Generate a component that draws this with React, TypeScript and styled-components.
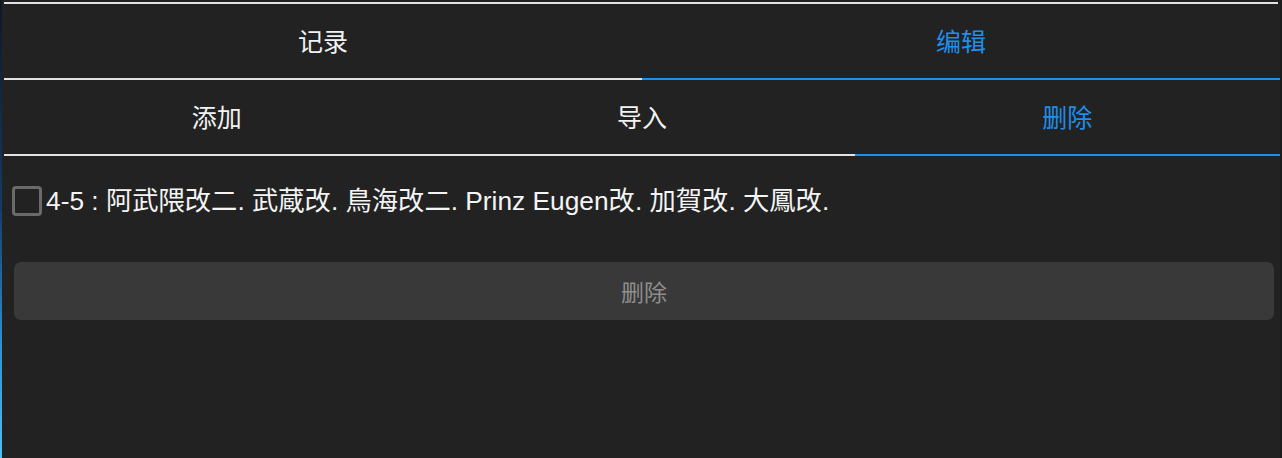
import React, { useState } from "react";
import styled, { createGlobalStyle } from "styled-components";

const Global = createGlobalStyle`
  html, body {
    margin: 0;
    padding: 0;
    height: 100%;
  }
  body {
    background:
      linear-gradient(to bottom, #0f1824 0%, #143a66 45%, #2f8fd0 75%, #4cc0f0 100%) left top / 2px 100% no-repeat,
      #1b1b1b;
    font-family: "Liberation Sans", "Noto Sans CJK SC", sans-serif;
    overflow: hidden;
  }
  #root { height: 100%; }
`;

const BLUE = "#1f8fe8";
const LINE = "#e2e2e2";

const Panel = styled.div`
  margin-left: 2px;
  width: 1278px;
  height: 458px;
  box-sizing: border-box;
  padding: 2px 0 0 2px;
  background: #222222;
  display: flex;
  flex-direction: column;
`;

const TopRule = styled.div`
  height: 2px;
  margin-right: 2px;
  background: ${LINE};
`;

const TabBar = styled.div<{ $cols: number }>`
  display: grid;
  grid-template-columns: repeat(${(p) => p.$cols}, 1fr);
  height: 76px;
`;

const Tab = styled.button<{ $active: boolean }>`
  all: unset;
  box-sizing: border-box;
  display: flex;
  align-items: center;
  justify-content: center;
  padding-bottom: 2px;
  cursor: pointer;
  font-family: "Liberation Sans", "Noto Sans CJK SC", sans-serif;
  font-size: 25px;
  color: ${(p) => (p.$active ? BLUE : "#f2f2f2")};
  border-bottom: 2px solid ${(p) => (p.$active ? BLUE : LINE)};
`;

const Content = styled.div`
  padding: 30px 6px 0 8px;
  display: flex;
  flex-direction: column;
`;

const Row = styled.label`
  display: flex;
  align-items: center;
  height: 30px;
  gap: 4px;
  cursor: pointer;
`;

const Box = styled.span<{ $checked: boolean }>`
  box-sizing: border-box;
  width: 30px;
  height: 30px;
  border: 3px solid #6a6a6a;
  border-radius: 4px;
  background: ${(p) => (p.$checked ? BLUE : "transparent")};
  flex: none;
`;

const RowText = styled.span`
  font-size: 26.3px;
  color: #f4f4f4;
  white-space: nowrap;
  line-height: 30px;
`;

const DeleteButton = styled.button`
  all: unset;
  box-sizing: border-box;
  margin: 46px 0 0 2px;
  height: 58px;
  width: 1260px;
  border-radius: 7px;
  background: #393939;
  display: flex;
  align-items: center;
  justify-content: center;
  font-family: "Liberation Sans", "Noto Sans CJK SC", sans-serif;
  font-size: 23px;
  color: #8e8e8e;
  cursor: pointer;
`;

export default function App() {
  const [top, setTop] = useState(1);
  const [sub, setSub] = useState(2);
  const [checked, setChecked] = useState(false);
  const topTabs = ["记录", "编辑"];
  const subTabs = ["添加", "导入", "删除"];
  return (
    <>
      <Global />
      <Panel>
        <TopRule />
        <TabBar $cols={2}>
          {topTabs.map((t, i) => (
            <Tab key={t} $active={top === i} onClick={() => setTop(i)}>
              {t}
            </Tab>
          ))}
        </TabBar>
        <TabBar $cols={3}>
          {subTabs.map((t, i) => (
            <Tab key={t} $active={sub === i} onClick={() => setSub(i)}>
              {t}
            </Tab>
          ))}
        </TabBar>
        <Content>
          <Row onClick={() => setChecked((c) => !c)}>
            <Box $checked={checked} />
            <RowText>4-5 : 阿武隈改二. 武蔵改. 鳥海改二. Prinz Eugen改. 加賀改. 大鳳改.</RowText>
          </Row>
          <DeleteButton>删除</DeleteButton>
        </Content>
      </Panel>
    </>
  );
}
